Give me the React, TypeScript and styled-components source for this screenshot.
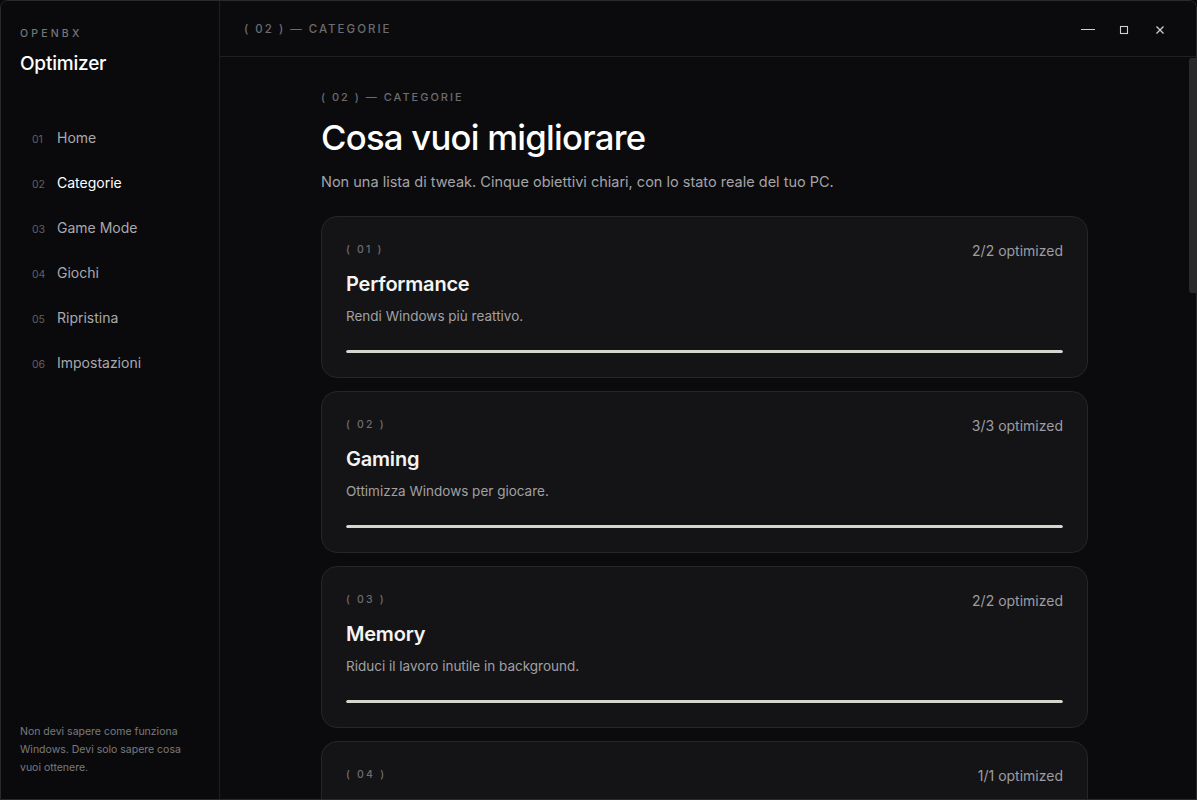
import React from "react";
import styled, { createGlobalStyle } from "styled-components";

const GlobalStyle = createGlobalStyle`
  html, body {
    margin: 0;
    padding: 0;
    background: #0a0a0c;
    height: 100%;
    overflow: hidden;
  }
  #root {
    height: 100%;
  }
  * {
    box-sizing: border-box;
  }
`;

const Window = styled.div`
  display: flex;
  width: 1197px;
  height: 800px;
  background: #0a0a0c;
  border: 1px solid #2a2a2e;
  border-radius: 8px 8px 0 0;
  overflow: hidden;
  font-family: Inter, "Liberation Sans", Arial, sans-serif;
  color: #f2f2f2;
`;

const Sidebar = styled.aside`
  width: 219px;
  flex-shrink: 0;
  display: flex;
  flex-direction: column;
  border-right: 1px solid #1f1f23;
  background: #0a0a0c;
  padding: 26px 0 22px 19px;
`;

const Brand = styled.div`
  font-size: 10.5px;
  letter-spacing: 3.2px;
  color: #76767a;
  font-weight: 500;
`;

const AppName = styled.div`
  margin-top: 12px;
  font-size: 19px;
  font-weight: 500;
  color: #ffffff;
  letter-spacing: -0.2px;
`;

const Nav = styled.nav`
  margin-top: 54px;
  display: flex;
  flex-direction: column;
  gap: 25px;
  padding-left: 12px;
`;

const NavItem = styled.div<{ $active?: boolean }>`
  display: flex;
  align-items: baseline;
  gap: 10px;
  height: 20px;
  font-size: 14px;
  color: ${(p) => (p.$active ? "#ffffff" : "#a9a9ad")};
`;

const NavNum = styled.span`
  font-size: 10.5px;
  color: #606064;
  width: 15px;
`;

const SideNote = styled.p`
  margin: auto 0 0 0;
  font-size: 10.5px;
  line-height: 18px;
  color: #7a7a7e;
  max-width: 170px;
`;

const Main = styled.div`
  position: relative;
  flex: 1;
  display: flex;
  flex-direction: column;
  min-width: 0;
  background: #0b0b0d;
`;

const TopBar = styled.header`
  height: 56px;
  flex-shrink: 0;
  display: flex;
  align-items: center;
  justify-content: space-between;
  padding: 1px 28px 0 24px;
  border-bottom: 1px solid #1f1f23;
`;

const Crumb = styled.div<{ $size?: number }>`
  font-size: ${(p) => p.$size ?? 11}px;
  letter-spacing: 2px;
  color: #6c6c70;
  font-weight: 500;
  white-space: nowrap;
`;

const Controls = styled.div`
  display: flex;
  align-items: center;
  gap: 20px;
`;

const ControlBtn = styled.button`
  width: 16px;
  height: 16px;
  padding: 0;
  border: none;
  background: none;
  color: #cfcfcf;
  display: flex;
  align-items: center;
  justify-content: center;
`;

const Scroll = styled.div`
  flex: 1;
  overflow-y: auto;
  scrollbar-width: none;
  &::-webkit-scrollbar {
    display: none;
  }
`;

const ScrollThumb = styled.div`
  position: absolute;
  right: 0;
  top: 57px;
  width: 7px;
  height: 235px;
  background: #2a2a2d;
  border-radius: 3px 0 0 3px;
`;

const Content = styled.div`
  width: 767px;
  margin: 0 0 0 101px;
  padding: 33px 0 80px;
`;

const Title = styled.h1`
  margin: 11px 0 0;
  font-size: 34.7px;
  font-weight: 500;
  color: #ffffff;
  letter-spacing: -0.75px;
  line-height: 44px;
`;

const Lead = styled.p`
  margin: 14px 0 0;
  font-size: 14.5px;
  color: #a4a4a8;
`;

const Cards = styled.div`
  margin-top: 26px;
  display: flex;
  flex-direction: column;
  gap: 13px;
`;

const Card = styled.section`
  height: 162px;
  background: #141416;
  border: 1px solid #26262a;
  border-radius: 16px;
  padding: 24px 24px 0 24px;
  display: flex;
  flex-direction: column;
`;

const CardHead = styled.div`
  display: flex;
  justify-content: space-between;
  align-items: flex-start;
  height: 24px;
`;

const Index = styled.span`
  margin-top: 2px;
  font-size: 10.5px;
  letter-spacing: 2.2px;
  color: #6e6e72;
  font-weight: 500;
`;

const Status = styled.span`
  font-size: 14px;
  color: #9d9da1;
  margin-top: 1px;
`;

const CardTitle = styled.h2`
  margin: 7px 0 0;
  font-size: 20px;
  font-weight: 600;
  color: #f4f4f4;
  letter-spacing: -0.2px;
`;

const CardText = styled.p`
  margin: 12px 0 0;
  font-size: 13.5px;
  color: #a0a0a4;
`;

const Track = styled.div`
  margin-top: 26px;
  height: 3px;
  border-radius: 2px;
  background: #2a2a2d;
  overflow: hidden;
`;

const Fill = styled.div`
  height: 100%;
  background: #d6d6cf;
  border-radius: 2px;
`;

const nav = [
  "Home",
  "Categorie",
  "Game Mode",
  "Giochi",
  "Ripristina",
  "Impostazioni",
];

const categories = [
  { title: "Performance", text: "Rendi Windows più reattivo.", done: 2, total: 2 },
  { title: "Gaming", text: "Ottimizza Windows per giocare.", done: 3, total: 3 },
  { title: "Memory", text: "Riduci il lavoro inutile in background.", done: 2, total: 2 },
  { title: "Storage", text: "Libera spazio sul disco.", done: 1, total: 1 },
  { title: "Privacy", text: "Limita la raccolta di dati.", done: 2, total: 2 },
];

const pad = (n: number) => String(n).padStart(2, "0");

export default function App() {
  return (
    <>
      <GlobalStyle />
      <Window>
        <Sidebar>
          <Brand>OPENBX</Brand>
          <AppName>Optimizer</AppName>
          <Nav>
            {nav.map((label, i) => (
              <NavItem key={label} $active={i === 1}>
                <NavNum>{pad(i + 1)}</NavNum>
                <span>{label}</span>
              </NavItem>
            ))}
          </Nav>
          <SideNote>
            Non devi sapere come funziona Windows. Devi solo sapere cosa vuoi
            ottenere.
          </SideNote>
        </Sidebar>
        <Main>
          <TopBar>
            <Crumb $size={11.5}>( 02 ) — CATEGORIE</Crumb>
            <Controls>
              <ControlBtn aria-label="minimize">
                <svg width="16" height="16" viewBox="0 0 16 16">
                  <path d="M1 8.5h14" stroke="currentColor" strokeWidth="1.2" />
                </svg>
              </ControlBtn>
              <ControlBtn aria-label="maximize">
                <svg width="16" height="16" viewBox="0 0 16 16">
                  <rect x="4.5" y="5.5" width="7" height="7" fill="none" stroke="currentColor" strokeWidth="1.1" />
                </svg>
              </ControlBtn>
              <ControlBtn aria-label="close">
                <svg width="16" height="16" viewBox="0 0 16 16">
                  <path d="M4.5 5.5l7 7M11.5 5.5l-7 7" stroke="currentColor" strokeWidth="1.3" />
                </svg>
              </ControlBtn>
            </Controls>
          </TopBar>
          <Scroll>
            <Content>
              <Crumb>( 02 ) — CATEGORIE</Crumb>
              <Title>Cosa vuoi migliorare</Title>
              <Lead>
                Non una lista di tweak. Cinque obiettivi chiari, con lo stato
                reale del tuo PC.
              </Lead>
              <Cards>
                {categories.map((c, i) => (
                  <Card key={c.title}>
                    <CardHead>
                      <Index>( {pad(i + 1)} )</Index>
                      <Status>
                        {c.done}/{c.total} optimized
                      </Status>
                    </CardHead>
                    <CardTitle>{c.title}</CardTitle>
                    <CardText>{c.text}</CardText>
                    <Track>
                      <Fill style={{ width: `${(c.done / c.total) * 100}%` }} />
                    </Track>
                  </Card>
                ))}
              </Cards>
            </Content>
          </Scroll>
          <ScrollThumb />
        </Main>
      </Window>
    </>
  );
}
